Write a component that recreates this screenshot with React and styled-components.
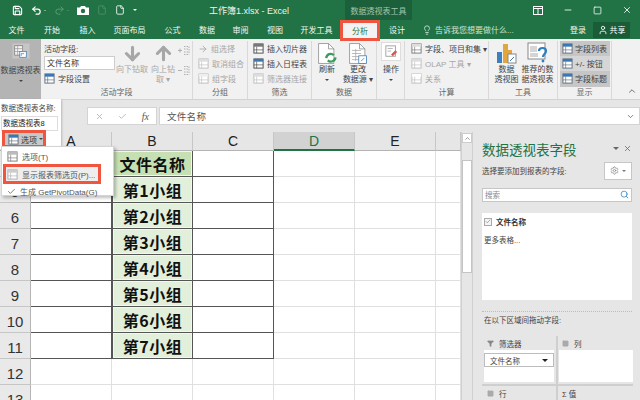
import React from "react";
import styled, { createGlobalStyle } from "styled-components";
import {
  Save,
  Undo2,
  Redo2,
  File,
  Minus,
  Square,
  X,
  Lightbulb,
  User,
  Search,
  Settings,
  Filter,
  Check,
  ChevronUp,
  ChevronDown,
  ArrowDown,
  ArrowUp,
  ArrowRight,
} from "lucide-react";

const GlobalStyle = createGlobalStyle`
  html, body { margin: 0; padding: 0; background: #e6e6e6; }
  * { box-sizing: border-box; }
`;

const FONT = `"Liberation Sans", "Noto Sans CJK SC", sans-serif`;
const RED = "#f0553f";
const GREEN = "#217346";

const MiniIcon = ({ color = "#5b6b7b", accent = "#3a78b5" }) => (
  <svg width="11" height="11" viewBox="0 0 12 12">
    <rect x="1" y="1" width="10" height="10" fill="#fff" stroke={color} />
    <rect x="1" y="1" width="10" height="3" fill={accent} />
    <path d="M4 4v7M1 7.5h10" stroke={color} strokeWidth="0.7" />
  </svg>
);

const PivotIcon = () => (
  <svg width="13" height="13" viewBox="0 0 18 18">
    <rect x="1" y="1" width="11" height="13" fill="#f4f4f4" stroke="#777" />
    <path d="M1 5h11M1 9h11M5 1v13" stroke="#999" />
    <rect x="8" y="9" width="9" height="8" fill="#fff" stroke="#3a78b5" />
    <path d="M10 15v-3h4" stroke="#3a78b5" fill="none" />
  </svg>
);

const CameraIcon = () => (
  <svg width="12" height="11" viewBox="0 0 12 11">
    <path d="M0 2.5h3L4 1h4l1 1.5h3V10H0z" fill="#fff" />
    <circle cx="6" cy="6" r="2.2" fill="#217346" />
  </svg>
);

const DocIcon = ({ refresh }) => (
  <svg width="20" height="23" viewBox="0 0 26 30">
    <path d="M2 2h13l7 7v19H2z" fill="#fff" stroke="#888" />
    <path d="M15 2v7h7" fill="none" stroke="#888" />
    {refresh ? (
      <path d="M12 21a6 6 0 0 1 10-4M24 20a6 6 0 0 1-10 4" fill="none" stroke="#3d9a5f" strokeWidth="3" />
    ) : (
      <>
        <path d="M5 11h12M5 15h12M5 19h12M5 23h12M10 9v16" stroke="#a8a8a8" />
        <rect x="14" y="18" width="10" height="10" fill="#fff" stroke="#3a78b5" />
        <path d="M17 25l4-4" stroke="#3a78b5" />
      </>
    )}
  </svg>
);

const ChartIcon = () => (
  <svg width="21" height="21" viewBox="0 0 21 21">
    <rect x="1" y="9" width="5" height="11" fill="#3f7fbf" />
    <rect x="7" y="1" width="5" height="19" fill="#e0a63f" />
    <rect x="12" y="7" width="4" height="13" fill="#e0a63f" />
    <rect x="12" y="11" width="8" height="9" fill="#fff" stroke="#888" />
    <path d="M14 18l4-4" stroke="#3a78b5" />
  </svg>
);

const RecommendIcon = () => (
  <svg width="22" height="22" viewBox="0 0 22 22">
    <rect x="1" y="1" width="17" height="16" fill="#fff" stroke="#888" />
    <rect x="3" y="4" width="7" height="6" fill="#d6d6d6" />
    <path d="M3 12h8M3 14h8" stroke="#aaa" />
    <path d="M12 9c0-4 7-4 7 0 0 3-3 3-3 6" fill="none" stroke="#2d7fc1" strokeWidth="2.2" />
    <circle cx="16" cy="19" r="1.4" fill="#2d7fc1" />
  </svg>
);

const ActionIcon = () => (
  <svg width="13" height="13" viewBox="0 0 15 15">
    <rect x="1" y="1" width="11" height="12" fill="#fff" stroke="#999" />
    <path d="M3 4h6M3 7h4" stroke="#aaa" />
    <path d="M7 11l5-5 2 2-5 5z" fill="#d9534f" />
  </svg>
);

const ExpandIcon = ({ minus }) => (
  <svg width="12" height="11" viewBox="0 0 12 11" fill="none" stroke="#b0b0b0">
    <path d="M0 5.5h4" />
    {!minus && <path d="M2 3.5v4" />}
    <path d="M6 1.5h5M6 4h5M6 7h5M6 9.5h5M11 1.5v8" strokeDasharray="1.5 1" />
  </svg>
);

const RestoreIcon = () => (
  <svg width="10" height="9" viewBox="0 0 10 9" fill="none" stroke="#fff">
    <rect x="0.5" y="0.5" width="9" height="8" />
    <path d="M0.5 2.5h9M5 2.5v6" />
  </svg>
);

const Window = styled.div`
  position: relative;
  width: 640px;
  height: 400px;
  overflow: hidden;
  display: flex;
  flex-direction: column;
  font-family: ${FONT};
  font-size: 8px;
  color: #444;
  background: #e6e6e6;
`;

const TitleBar = styled.div`
  height: 20px;
  display: flex;
  align-items: center;
  background: ${GREEN};
  color: #eef5f0;
`;

const Quick = styled.div`
  width: 209px;
  padding-left: 12px;
  display: flex;
  align-items: center;
  gap: 8px;
  color: #fff;
`;

const QuickPair = styled.span`
  display: flex;
  align-items: center;
  gap: 2px;
`;

const DocTitle = styled.div`
  width: 136px;
  font-size: 9px;
  white-space: nowrap;
`;

const ToolHeader = styled.div`
  width: 67px;
  height: 20px;
  display: flex;
  align-items: center;
  justify-content: center;
  background: #1c5f3b;
  color: #9fc7b0;
  font-size: 8px;
  white-space: nowrap;
`;

const WinControls = styled.div`
  margin-left: auto;
  display: flex;
  align-items: center;
  gap: 20px;
  padding-right: 8px;
  color: #fff;
`;

const TabBar = styled.div`
  height: 19px;
  display: flex;
  align-items: center;
  background: ${GREEN};
  color: #f2f7f4;
  font-size: 8px;
`;

const Tab = styled.div`
  width: ${(p) => p.$w}px;
  height: 19px;
  flex: none;
  display: flex;
  align-items: center;
  justify-content: center;
  white-space: nowrap;
`;

const ActiveTab = styled(Tab)`
  position: relative;
  height: 21px;
  margin-top: 2px;
  background: #f3f3f3;
  color: ${GREEN};
  outline: 3px solid ${RED};
  outline-offset: -3px;
  z-index: 3;
`;

const TellMe = styled.div`
  margin-left: 8px;
  display: flex;
  align-items: center;
  gap: 3px;
  color: #cfe3d7;
  white-space: nowrap;
`;

const Login = styled.div`
  margin-left: auto;
  margin-right: 7px;
`;

const Share = styled.div`
  width: 37px;
  height: 16px;
  margin-right: 10px;
  display: flex;
  align-items: center;
  justify-content: center;
  gap: 2px;
  background: #1a5c38;
  color: #fff;
`;

const Ribbon = styled.div`
  height: 61px;
  display: flex;
  position: relative;
  background: #f1f1f1;
  border-bottom: 1px solid #d2d2d2;
`;

const PressedButton = styled.div`
  width: 41px;
  flex: none;
  display: flex;
  flex-direction: column;
  align-items: center;
  padding-top: 4px;
  gap: 5px;
  background: #b4b4b4;
  color: #444;
  white-space: nowrap;
`;

const PivotBox = styled.div`
  width: 18px;
  height: 16px;
  display: flex;
  align-items: center;
  justify-content: center;
  background: #c6c6c6;
  border: 1px solid #bdbdbd;
`;

const Group = styled.div`
  width: ${(p) => p.$w}px;
  flex: none;
  display: flex;
  flex-direction: column;
  border-right: 1px solid #d9d9d9;
  margin-top: 2px;
`;

const GroupBody = styled.div`
  height: 47px;
  display: flex;
  gap: ${(p) => p.$gap || 0}px;
  padding-left: ${(p) => p.$pad || 0}px;
`;

const GroupLabel = styled.div`
  height: 12px;
  line-height: 12px;
  text-align: center;
  color: #666;
`;

const Stack = styled.div`
  width: ${(p) => (p.$w ? `${p.$w}px` : "auto")};
  display: flex;
  flex-direction: column;
  flex: none;
`;

const ExpandStack = styled(Stack)`
  padding-top: 2px;
  gap: 5px;
`;

const SmallRow = styled.div`
  height: 15px;
  display: flex;
  align-items: center;
  gap: 3px;
  white-space: nowrap;
  color: ${(p) => (p.$off ? "#a6a6a6" : "#444")};
`;

const ShowStack = styled(Stack)`
  background: #c6c6c6;
`;

const ShowRow = styled(SmallRow)`
  padding-left: 2px;
  gap: 2px;
  background: ${(p) => (p.$on ? "#c6c6c6" : "#d6d6d6")};
`;

const FieldInput = styled.div`
  width: 71px;
  height: 14px;
  padding-left: 2px;
  line-height: 13px;
  margin: 0 0 1px;
  background: #fff;
  border: 1px solid #ccc;
  color: #333;
  white-space: nowrap;
`;

const BigButton = styled.div`
  width: ${(p) => p.$w}px;
  flex: none;
  display: flex;
  flex-direction: column;
  align-items: center;
  text-align: center;
  line-height: 10px;
  color: ${(p) => (p.$off ? "#a6a6a6" : "#444")};
`;

const IconSlot = styled.div`
  height: 24px;
  flex: none;
  display: flex;
  align-items: center;
  justify-content: center;
`;

const NoWrap = styled.span`
  white-space: nowrap;
`;

const ActionBox = styled.div`
  width: 20px;
  height: 19px;
  margin: 1px 0 4px;
  display: flex;
  align-items: center;
  justify-content: center;
  background: #fff;
  border: 1px solid #ddd;
`;

const ButtonCaret = styled.div`
  height: 9px;
  display: flex;
  align-items: center;
`;

const Collapse = styled.div`
  margin-left: auto;
  padding: 47px 3px 0 0;
  color: #555;
`;

const FormulaBar = styled.div`
  height: 32px;
  display: flex;
  align-items: flex-start;
  padding-top: 7px;
  background: #e6e6e6;
  padding-left: 87px;
  gap: 2px;
`;

const FormulaButtons = styled.div`
  width: 70px;
  height: 18px;
  display: flex;
  align-items: center;
  justify-content: space-around;
  background: #fff;
  border: 1px solid #d4d4d4;
  color: #aaa;
`;

const Fx = styled.span`
  font-family: "Liberation Serif", serif;
  font-style: italic;
  font-size: 10px;
  color: #555;
`;

const FormulaInput = styled.div`
  flex: 1;
  height: 18px;
  padding: 0 4px 0 7px;
  display: flex;
  align-items: center;
  justify-content: space-between;
  background: #fff;
  border: 1px solid #d4d4d4;
  font-size: 9.5px;
  letter-spacing: 0.3px;
  color: #555;
`;

const Main = styled.div`
  flex: 1;
  display: flex;
  min-height: 0;
`;

const Sheet = styled.div`
  width: 461px;
  flex: none;
  display: grid;
  grid-template-columns: 31px repeat(5, 81px) 25px;
  grid-template-rows: 19px repeat(10, 26px);
  background: #fff;
  overflow: hidden;
`;

const ColHead = styled.div`
  display: flex;
  align-items: center;
  justify-content: center;
  background: ${(p) => (p.$on ? "#d2d2d2" : "#e6e6e6")};
  border-right: 1px solid #c6c6c6;
  border-bottom: ${(p) => (p.$on ? `2px solid ${GREEN}` : "1px solid #b4b4b4")};
  color: ${(p) => (p.$on ? GREEN : "#222")};
  font-size: 14px;
`;

const RowHead = styled.div`
  display: flex;
  align-items: center;
  justify-content: center;
  padding-top: 3px;
  background: #e9e9e9;
  border-bottom: 1px solid #c6c6c6;
  border-right: 1px solid #b4b4b4;
  color: #333;
  font-size: 15px;
`;

const Cell = styled.div`
  border-right: 1px solid ${(p) => (p.$framed ? "#555" : "#e0e0e0")};
  border-bottom: 1px solid ${(p) => (p.$framed ? "#555" : "#e0e0e0")};
  background: #fff;
`;

const GroupCell = styled(Cell)`
  display: flex;
  align-items: center;
  justify-content: center;
  background: ${(p) => (p.$head ? "#c6e0b4" : "#e2efda")};
  box-shadow: inset 0 0 0 1px #f2f8ee;
  color: #111;
  font-family: "Noto Sans CJK SC", sans-serif;
  font-size: 16px;
  font-weight: 700;
  letter-spacing: 0.5px;
  border-left: 1px solid #555;
`;

const ScrollTrack = styled.div`
  width: 11px;
  flex: none;
  display: flex;
  flex-direction: column;
  padding-top: 1px;
  background: #e6e6e6;
  border-left: 1px solid #d0d0d0;
`;

const ScrollUp = styled.div`
  height: 10px;
  display: flex;
  align-items: center;
  justify-content: center;
  background: #fff;
  border: 1px solid #ccc;
  color: #555;
`;

const ScrollThumb = styled.div`
  height: 113px;
  margin-top: 17px;
  background: #fff;
  border: 1px solid #c4c4c4;
`;

const Panel = styled.div`
  width: 168px;
  flex: none;
  display: flex;
  flex-direction: column;
  padding: 0 8px 0 9px;
  background: #e6e6e6;
  border-left: 1px solid #d0d0d0;
  font-size: 7.5px;
`;

const PanelHead = styled.div`
  height: 30px;
  padding-top: 4px;
  display: flex;
  align-items: center;
  justify-content: space-between;
`;

const PanelTitle = styled.div`
  font-size: 13.5px;
  color: ${GREEN};
  white-space: nowrap;
`;

const PanelTools = styled.div`
  display: flex;
  align-items: center;
  gap: 4px;
  color: #666;
`;

const Caret = styled.span`
  display: inline-block;
  flex: none;
  width: 0;
  height: 0;
  border-left: ${(p) => p.$s || 3}px solid transparent;
  border-right: ${(p) => p.$s || 3}px solid transparent;
  border-top: ${(p) => p.$s || 3}px solid ${(p) => p.$c || "#555"};
`;

const ChooseRow = styled.div`
  height: 18px;
  display: flex;
  align-items: center;
  justify-content: space-between;
  white-space: nowrap;
`;

const GearButton = styled.div`
  width: 28px;
  height: 18px;
  display: flex;
  align-items: center;
  justify-content: center;
  gap: 3px;
  background: #fff;
  border: 1px solid #c6c6c6;
  color: #888;
`;

const SearchBox = styled.div`
  height: 15px;
  margin-top: 8px;
  padding: 0 2px;
  display: flex;
  align-items: center;
  justify-content: space-between;
  background: #fff;
  border: 1px solid #c6c6c6;
  color: #888;
`;

const FieldList = styled.div`
  height: 88px;
  margin-top: 11px;
  padding: 2px;
  background: #fff;
`;

const FieldRow = styled.div`
  display: flex;
  align-items: center;
  gap: 4px;
  height: 13px;
  font-weight: 700;
  color: #333;
`;

const CheckBox = styled.span`
  width: 8px;
  height: 8px;
  display: flex;
  align-items: center;
  justify-content: center;
  background: #f4f4f4;
  border: 1px solid #aaa;
  color: #666;
`;

const MoreTables = styled.div`
  margin-top: 6px;
`;

const Dotted = styled.div`
  margin-top: 11px;
  border-top: 1px dotted #bcbcbc;
`;

const DragLabel = styled.div`
  margin: 1px 0 0 2px;
  height: 15px;
  line-height: 15px;
  white-space: nowrap;
`;

const Areas = styled.div`
  margin-top: 8px;
  display: grid;
  grid-template-columns: 76px 75px;
  grid-template-rows: 50px 14px;
`;

const Area = styled.div`
  display: flex;
  flex-direction: column;
  padding: 0 ${(p) => (p.$left ? 2 : 0)}px 0 ${(p) => (p.$left ? 2 : 1)}px;
  border-right: ${(p) => (p.$left ? "2px solid #cfcfcf" : "none")};
  border-bottom: ${(p) => (p.$top ? "2px solid #cfcfcf" : "none")};
`;

const AreaHead = styled.div`
  height: 14px;
  flex: none;
  display: flex;
  align-items: center;
  gap: 5px;
  padding-left: 3px;
  white-space: nowrap;
`;

const AreaBody = styled.div`
  height: 32px;
  padding: 3px 0 0 0;
  background: #fff;
`;

const AreaItem = styled.div`
  height: 14px;
  padding: 0 5px;
  display: flex;
  align-items: center;
  justify-content: space-between;
  background: #fff;
  border: 1px solid #bdbdbd;
`;

const PivotName = styled.div`
  position: absolute;
  left: 0;
  top: 99px;
  width: 61px;
  height: 50px;
  padding: 3px 2px 0 1px;
  background: #fff;
  box-shadow: 1px 1px 2px rgba(0, 0, 0, 0.2);
  z-index: 4;
  font-size: 7.5px;
  white-space: nowrap;
`;

const NameInput = styled.div`
  width: 57px;
  height: 15px;
  margin-top: 3px;
  padding-left: 1px;
  line-height: 14px;
  border: 1px solid #ddd;
  color: #222;
`;

const OptionButton = styled.div`
  width: 44px;
  height: 18px;
  margin-left: 1px;
  margin-top: -1px;
  display: flex;
  align-items: center;
  gap: 2px;
  padding-left: 3px;
  background: #c8c8c8;
  border: 3px solid ${RED};
  color: #333;
  font-size: 8px;
  position: relative;
`;

const Menu = styled.div`
  position: absolute;
  left: 1px;
  top: 146px;
  width: 113px;
  height: 50px;
  padding-top: 2px;
  background: #fff;
  border: 1px solid #d4d4d4;
  box-shadow: 2px 2px 3px rgba(0, 0, 0, 0.25);
  z-index: 5;
`;

const MenuItem = styled.div`
  height: ${(p) => p.$h || 15}px;
  width: ${(p) => (p.$boxed ? "98px" : "auto")};
  margin-left: 1px;
  padding-left: ${(p) => (p.$boxed ? 1 : 4)}px;
  display: flex;
  align-items: center;
  gap: 4px;
  white-space: nowrap;
  color: #555;
  border: ${(p) => (p.$boxed ? `3px solid ${RED}` : "none")};
  background: ${(p) => (p.$boxed ? "#eee" : "transparent")};
`;

const COLS = ["A", "B", "C", "D", "E"];
const GROUPS = ["文件名称", "第1小组", "第2小组", "第3小组", "第4小组", "第5小组", "第6小组", "第7小组"];
const ROWS = [4, 5, 6, 7, 8, 9, 10, 11, 12, 13];

const App = () => {
  return (
    <Window>
      <GlobalStyle />
      <TitleBar>
        <Quick>
          <Save size={11} strokeWidth={2.4} />
          <QuickPair>
            <Undo2 size={11} strokeWidth={2.6} />
            <Caret $c="#cfe3d7" $s={1.5} />
          </QuickPair>
          <QuickPair>
            <Redo2 size={11} color="#5f9c7c" />
            <Caret $c="#5f9c7c" $s={1.5} />
          </QuickPair>
          <CameraIcon />
          <File size={10} color="#4f8f6d" />
          <File size={10} />
          <Caret $c="#fff" $s={2} />
        </Quick>
        <DocTitle>工作簿1.xlsx - Excel</DocTitle>
        <ToolHeader>数据透视表工具</ToolHeader>
        <WinControls>
          <RestoreIcon />
          <Minus size={10} />
          <Square size={9} />
          <X size={10} />
        </WinControls>
      </TitleBar>

      <TabBar>
        <Tab $w={33}>文件</Tab>
        <Tab $w={38}>开始</Tab>
        <Tab $w={33}>插入</Tab>
        <Tab $w={51}>页面布局</Tab>
        <Tab $w={35}>公式</Tab>
        <Tab $w={34}>数据</Tab>
        <Tab $w={33}>审阅</Tab>
        <Tab $w={36}>视图</Tab>
        <Tab $w={47}>开发工具</Tab>
        <ActiveTab $w={40}>分析</ActiveTab>
        <Tab $w={34}>设计</Tab>
        <TellMe>
          <Lightbulb size={10} />
          告诉我您想要做什么...
        </TellMe>
        <Login>登录</Login>
        <Share>
          <User size={10} />
          共享
        </Share>
      </TabBar>

      <Ribbon>
        <PressedButton>
          <PivotBox>
            <PivotIcon />
          </PivotBox>
          数据透视表
          <Caret $c="#444" $s={2} />
        </PressedButton>

        <Group $w={152}>
          <GroupBody $pad={3}>
            <Stack $w={72}>
              <SmallRow>活动字段:</SmallRow>
              <FieldInput>文件名称</FieldInput>
              <SmallRow>
                <MiniIcon />
                字段设置
              </SmallRow>
            </Stack>
            <BigButton $w={32} $off>
              <IconSlot>
                <ArrowDown size={21} strokeWidth={3.5} />
              </IconSlot>
              <NoWrap>向下钻取</NoWrap>
            </BigButton>
            <BigButton $w={30} $off>
              <IconSlot>
                <ArrowUp size={21} strokeWidth={3.5} />
              </IconSlot>
              向上钻
              <NoWrap>取 ▾</NoWrap>
            </BigButton>
            <ExpandStack>
              <SmallRow>
                <ExpandIcon />
              </SmallRow>
              <SmallRow>
                <ExpandIcon minus />
              </SmallRow>
            </ExpandStack>
          </GroupBody>
          <GroupLabel>活动字段</GroupLabel>
        </Group>

        <Group $w={55}>
          <GroupBody $pad={5}>
            <Stack>
              <SmallRow $off>
                <ArrowRight size={10} />
                组选择
              </SmallRow>
              <SmallRow $off>
                <MiniIcon color="#bbb" accent="#ddd" />
                取消组合
              </SmallRow>
              <SmallRow $off>
                <MiniIcon color="#bbb" accent="#eee" />
                组字段
              </SmallRow>
            </Stack>
          </GroupBody>
          <GroupLabel>分组</GroupLabel>
        </Group>

        <Group $w={64}>
          <GroupBody $pad={5}>
            <Stack>
              <SmallRow>
                <MiniIcon color="#444" accent="#777" />
                插入切片器
              </SmallRow>
              <SmallRow>
                <MiniIcon color="#444" accent="#3a78b5" />
                插入日程表
              </SmallRow>
              <SmallRow $off>
                <MiniIcon color="#bbb" accent="#ddd" />
                筛选器连接
              </SmallRow>
            </Stack>
          </GroupBody>
          <GroupLabel>筛选</GroupLabel>
        </Group>

        <Group $w={65}>
          <GroupBody $pad={4} $gap={4}>
            <BigButton $w={22}>
              <IconSlot>
                <DocIcon refresh />
              </IconSlot>
              刷新
              <ButtonCaret>
                <Caret $c="#444" $s={2} />
              </ButtonCaret>
            </BigButton>
            <BigButton $w={32}>
              <IconSlot>
                <DocIcon />
              </IconSlot>
              更改
              <NoWrap>数据源 ▾</NoWrap>
            </BigButton>
          </GroupBody>
          <GroupLabel>数据</GroupLabel>
        </Group>

        <Group $w={28}>
          <GroupBody $pad={2}>
            <BigButton $w={24}>
              <ActionBox>
                <ActionIcon />
              </ActionBox>
              操作
              <ButtonCaret>
                <Caret $c="#444" $s={2} />
              </ButtonCaret>
            </BigButton>
          </GroupBody>
          <GroupLabel />
        </Group>

        <Group $w={84}>
          <GroupBody $pad={6}>
            <Stack>
              <SmallRow>
                <MiniIcon color="#777" accent="#ddd" />
                字段、项目和集 ▾
              </SmallRow>
              <SmallRow $off>
                <MiniIcon color="#bbb" accent="#ddd" />
                OLAP 工具 ▾
              </SmallRow>
              <SmallRow $off>
                <MiniIcon color="#bbb" accent="#fff" />
                关系
              </SmallRow>
            </Stack>
          </GroupBody>
          <GroupLabel>计算</GroupLabel>
        </Group>

        <Group $w={69}>
          <GroupBody $pad={3}>
            <BigButton $w={29}>
              <IconSlot>
                <ChartIcon />
              </IconSlot>
              数据
              <NoWrap>透视图</NoWrap>
            </BigButton>
            <BigButton $w={33}>
              <IconSlot>
                <RecommendIcon />
              </IconSlot>
              <NoWrap>推荐的数</NoWrap>
              <NoWrap>据透视表</NoWrap>
            </BigButton>
          </GroupBody>
          <GroupLabel>工具</GroupLabel>
        </Group>

        <Group $w={54}>
          <GroupBody $pad={2}>
            <ShowStack $w={50}>
              <ShowRow $on>
                <MiniIcon />
                字段列表
              </ShowRow>
              <ShowRow>
                <MiniIcon />
                +/- 按钮
              </ShowRow>
              <ShowRow $on>
                <MiniIcon />
                字段标题
              </ShowRow>
            </ShowStack>
          </GroupBody>
          <GroupLabel>显示</GroupLabel>
        </Group>

        <Collapse>
          <ChevronUp size={10} />
        </Collapse>
      </Ribbon>

      <FormulaBar>
        <FormulaButtons>
          <X size={9} />
          <Check size={9} />
          <Fx>fx</Fx>
        </FormulaButtons>
        <FormulaInput>
          文件名称
          <ChevronDown size={9} />
        </FormulaInput>
      </FormulaBar>

      <Main>
        <Sheet>
          <ColHead />
          {COLS.map((c) => (
            <ColHead key={c} $on={c === "D"}>
              {c}
            </ColHead>
          ))}
          <ColHead />
          {ROWS.map((r, i) => (
            <React.Fragment key={r}>
              <RowHead>{r}</RowHead>
              <Cell $framed={i < 8} />
              {i < 8 ? (
                <GroupCell $framed $head={i === 0}>
                  {GROUPS[i]}
                </GroupCell>
              ) : (
                <Cell />
              )}
              <Cell $framed={i < 8} />
              <Cell />
              <Cell />
              <Cell />
            </React.Fragment>
          ))}
        </Sheet>

        <ScrollTrack>
          <ScrollUp>
            <ChevronUp size={7} />
          </ScrollUp>
          <ScrollThumb />
        </ScrollTrack>

        <Panel>
          <PanelHead>
            <PanelTitle>数据透视表字段</PanelTitle>
            <PanelTools>
              <Caret $c="#666" />
              <X size={9} />
            </PanelTools>
          </PanelHead>
          <ChooseRow>
            选择要添加到报表的字段:
            <GearButton>
              <Settings size={9} />
              <Caret $c="#777" $s={2} />
            </GearButton>
          </ChooseRow>
          <SearchBox>
            搜索
            <Search size={9} color="#2d7fc1" />
          </SearchBox>
          <FieldList>
            <FieldRow>
              <CheckBox>
                <Check size={7} />
              </CheckBox>
              文件名称
            </FieldRow>
            <MoreTables>更多表格...</MoreTables>
          </FieldList>
          <Dotted />
          <DragLabel>在以下区域间拖动字段:</DragLabel>
          <Areas>
            <Area $left $top>
              <AreaHead>
                <Filter size={7} fill="#888" color="#888" />
                筛选器
              </AreaHead>
              <AreaBody>
                <AreaItem>
                  文件名称
                  <Caret $c="#222" />
                </AreaItem>
              </AreaBody>
            </Area>
            <Area $top>
              <AreaHead>
                <Square size={7} fill="#aaa" color="#aaa" />列
              </AreaHead>
              <AreaBody />
            </Area>
            <Area $left>
              <AreaHead>
                <Square size={7} fill="#aaa" color="#aaa" />行
              </AreaHead>
            </Area>
            <Area>
              <AreaHead>Σ 值</AreaHead>
            </Area>
          </Areas>
        </Panel>
      </Main>

      <PivotName>
        数据透视表名称:
        <NameInput>数据透视表8</NameInput>
        <OptionButton>
          <MiniIcon />
          选项
          <Caret $c="#444" $s={2} />
        </OptionButton>
      </PivotName>

      <Menu>
        <MenuItem>
          <MiniIcon color="#777" accent="#bbb" />
          选项(T)
        </MenuItem>
        <MenuItem $boxed $h={20}>
          <MiniIcon color="#aaa" accent="#ccc" />
          显示报表筛选页(P)...
        </MenuItem>
        <MenuItem>
          <Check size={9} />
          生成 GetPivotData(G)
        </MenuItem>
      </Menu>
    </Window>
  );
};

export default App;
